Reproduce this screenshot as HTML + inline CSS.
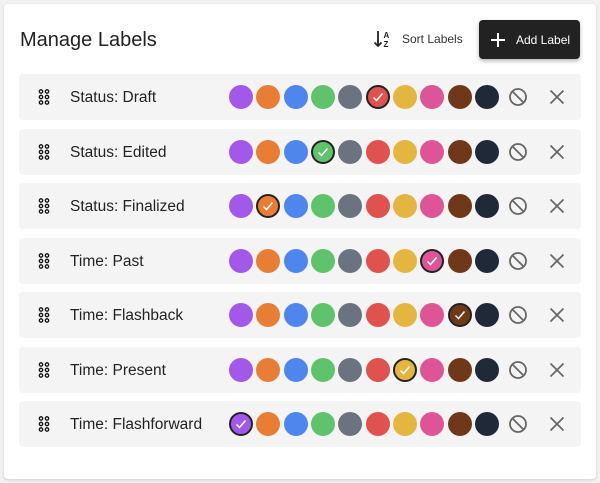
<!DOCTYPE html>
<html><head><style>
*{box-sizing:border-box;margin:0;padding:0}
body{width:600px;height:483px;background:#f2f2f2;font-family:"Liberation Sans",sans-serif;position:relative;overflow:hidden}
.card{position:absolute;left:4px;top:4px;width:592px;height:475px;background:#fff;border-radius:4px;box-shadow:0 1px 3px rgba(0,0,0,.15)}
.title{position:absolute;left:20px;top:29px;font-size:20px;color:#222}
.sort{position:absolute;left:373px;top:29px;font-size:12px;color:#333;display:flex;align-items:center}
.btn{position:absolute;left:479px;top:20px;width:101px;height:39px;background:#222;border-radius:4px;color:#fff;font-size:12px;display:flex;align-items:center;box-shadow:0 2px 4px rgba(0,0,0,.3)}
.row{position:absolute;left:19px;width:562px;height:46px;background:#f4f4f4;border-radius:4px}
.lbl{position:absolute;left:51px;top:15px;font-size:15.5px;color:#222}
.drag{position:absolute;left:19px;top:15px}
.c{position:absolute;top:11px;width:24px;height:24px;border-radius:50%}
.c.s{border:2px solid #222}
.c svg{position:absolute;left:3px;top:3px}
.ban{position:absolute;left:489px;top:13px}
.x{position:absolute;left:530px;top:15px}
</style></head><body>
<div class="card"></div>
<div class="title">Manage Labels</div>
<div class="sort"><svg width="20" height="20" viewBox="0 0 20 20"><path d="M5 2v15M1.5 13.5l3.5 3.5 3.5-3.5" stroke="#222" stroke-width="1.8" fill="none"/><text x="10.5" y="9" font-size="8" font-family="Liberation Sans" font-weight="bold" fill="#222">A</text><text x="10.5" y="18" font-size="8" font-family="Liberation Sans" font-weight="bold" fill="#222">Z</text></svg><span style="margin-left:9px">Sort Labels</span></div>
<div class="btn"><svg style="margin-left:11px" width="16" height="16"><path d="M8 1v14M1 8h14" stroke="#fff" stroke-width="2"/></svg><span style="margin-left:10px">Add Label</span></div>
<div id="rows"></div>
<script>
const cols=['#a259e9','#e97d33','#4f86ee','#5ec36b','#6b7280','#e0524d','#e4b53f','#dd5597','#6f3919','#1f2937'];
const rows=[['Status: Draft',5],['Status: Edited',3],['Status: Finalized',1],['Time: Past',7],['Time: Flashback',8],['Time: Present',6],['Time: Flashforward',0]];
const tops=[74,129,183,238,292,347,401];
let h='';
rows.forEach((r,i)=>{
h+=`<div class="row" style="top:${tops[i]}px"><svg class="drag" width="12" height="16">`;
for(let a=0;a<3;a++)for(let b=0;b<2;b++)h+=`<circle cx="${3+b*6}" cy="${2.5+a*5.5}" r="1.7" fill="none" stroke="#111" stroke-width="1.3"/>`;
h+=`</svg><div class="lbl">${r[0]}</div>`;
cols.forEach((c,j)=>{const s=j==r[1];h+=`<div class="c${s?' s':''}" style="left:${210+j*27.35}px;background:${c}">${s?'<svg width="14" height="14"><path d="M2.5 7.5l3 3 6-7" stroke="#fff" stroke-width="1.5" fill="none"/></svg>':''}</div>`});
h+=`<svg class="ban" width="20" height="20"><circle cx="10" cy="10" r="8" stroke="#666" stroke-width="1.8" fill="none"/><path d="M4.5 4.5l11 11" stroke="#666" stroke-width="1.8"/></svg>`;
h+=`<svg class="x" width="16" height="16"><path d="M1.5 1.5l13 13M14.5 1.5l-13 13" stroke="#666" stroke-width="1.7"/></svg></div>`;
});
document.getElementById('rows').innerHTML=h;
</script>
</body></html>
